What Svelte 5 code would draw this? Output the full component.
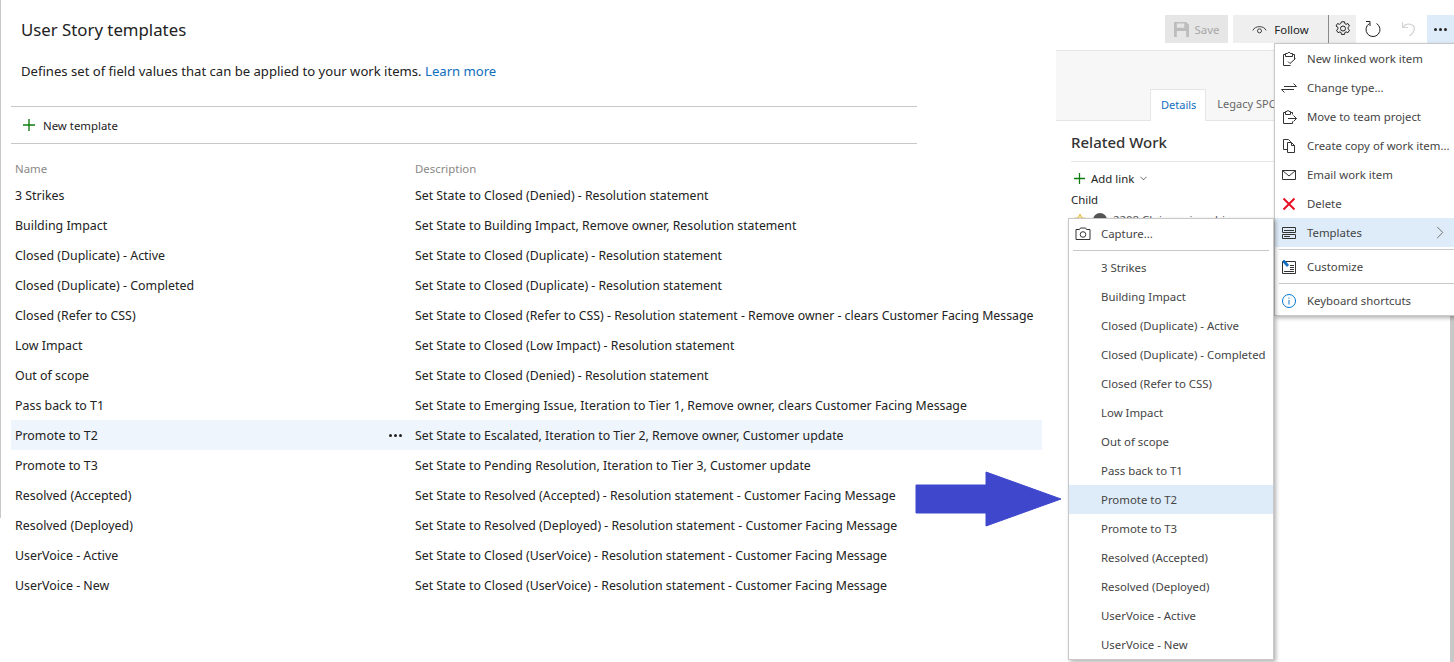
<script>
  const rows = [
    ['3 Strikes', 'Set State to Closed (Denied) - Resolution statement'],
    ['Building Impact', 'Set State to Building Impact, Remove owner, Resolution statement'],
    ['Closed (Duplicate) - Active', 'Set State to Closed (Duplicate) - Resolution statement'],
    ['Closed (Duplicate) - Completed', 'Set State to Closed (Duplicate) - Resolution statement'],
    ['Closed (Refer to CSS)', 'Set State to Closed (Refer to CSS) - Resolution statement - Remove owner - clears Customer Facing Message'],
    ['Low Impact', 'Set State to Closed (Low Impact) - Resolution statement'],
    ['Out of scope', 'Set State to Closed (Denied) - Resolution statement'],
    ['Pass back to T1', 'Set State to Emerging Issue, Iteration to Tier 1, Remove owner, clears Customer Facing Message'],
    ['Promote to T2', 'Set State to Escalated, Iteration to Tier 2, Remove owner, Customer update'],
    ['Promote to T3', 'Set State to Pending Resolution, Iteration to Tier 3, Customer update'],
    ['Resolved (Accepted)', 'Set State to Resolved (Accepted) - Resolution statement - Customer Facing Message'],
    ['Resolved (Deployed)', 'Set State to Resolved (Deployed) - Resolution statement - Customer Facing Message'],
    ['UserVoice - Active', 'Set State to Closed (UserVoice) - Resolution statement - Customer Facing Message'],
    ['UserVoice - New', 'Set State to Closed (UserVoice) - Resolution statement - Customer Facing Message']
  ]
</script>

<div class="page">
  <main class="main">
    <h1 class="title">User Story templates</h1>
    <p class="intro">Defines set of field values that can be applied to your work items. <span class="link">Learn more</span></p>

    <div class="cmdBar">
      <svg class="plus" viewBox="0 0 14 14"><path d="M7 0v14M0 7h14" /></svg>
      <span>New template</span>
    </div>

    <div class="listHead">
      <span class="headName">Name</span>
      <span>Description</span>
    </div>

    {#each rows as row}
      <div class="row" class:row--active={row[0] === 'Promote to T2'}>
        <span class="nameCol">{row[0]}</span>
        <span class="descCol">{row[1]}</span>
        {#if row[0] === 'Promote to T2'}
          <span class="rowDots"><i></i><i></i><i></i></span>
        {/if}
      </div>
    {/each}
  </main>

  <aside class="side">
    <div class="toolbar">
      <div class="btn btn--save">
        <svg viewBox="0 0 16 16" width="15" height="15"><path fill="#bdbdbd" fill-rule="evenodd" d="M0 0h13l3 3v13H0zM3 1.500V6h8V1.500zM3 9.500V16h10V9.500z" /></svg>
        <span>Save</span>
      </div>
      <div class="btn btn--follow">
        <svg viewBox="0 0 16 12" width="15" height="11" fill="none" stroke="#333"><path d="M.8 7c2.200-5.500 12.200-5.500 14.400 0" /><circle cx="8" cy="7.500" r="2.200" /></svg>
        <span>Follow</span>
      </div>
      <div class="btn btn--gear">
        <svg viewBox="0 0 16 16" width="16" height="16" fill="none" stroke="#222"><path d="M6.500.8h3l.4 1.900 1.200.6 1.800-.8 1.600 2.500-1.500 1.400v1.400l1.500 1.400-1.600 2.500-1.800-.8-1.200.6-.4 1.900h-3l-.4-1.900-1.200-.6-1.800.8-1.600-2.500 1.500-1.400V6.400L1 5 2.600 2.500l1.800.8 1.200-.6z" /><circle cx="8" cy="7.500" r="2.500" /></svg>
      </div>
      <div class="iconBtn">
        <svg viewBox="0 0 17 17" width="17" height="17" fill="none" stroke="#222"><path d="M11.500 2.500A7 7 0 1 1 4.500 2.500" /><path d="M1 .5h4v4.500" /></svg>
      </div>
      <div class="iconBtn">
        <svg viewBox="0 0 16 16" width="16" height="16" fill="none" stroke="#d4d4d4" stroke-width="1.200"><path d="M1.500 1v5.500H7M2 6C4 3 9 2 12 4.500c3 3 1 7-3.500 10.500" /></svg>
      </div>
      <div class="iconBtn iconBtn--on"><span class="rowDots"><i></i><i></i><i></i></span></div>
    </div>

    <div class="sideHead">
      <div class="tabs">
        <span class="tab tab--on">Details</span>
        <span class="tab">Legacy SPOC</span>
      </div>
    </div>

    <div class="sideBody">
      <h2 class="related">Related Work</h2>
      <div class="addLink">
        <svg class="plus plus--small" viewBox="0 0 14 14"><path d="M7 0v14M0 7h14" /></svg>
        <span>Add link</span>
        <svg viewBox="0 0 8 5" width="7" height="5" fill="none" stroke="#555"><path d="M.5.5 4 4 7.500.5" /></svg>
      </div>
      <div class="child">Child</div>
      <div class="childItem">
        <svg viewBox="0 0 14 14" width="14" height="14" fill="#fbeeb8" stroke="#e8b93a"><path d="M7 1l1.800 3.900 4.200.5-3.100 2.900.8 4.200L7 10.400 3.300 12.500l.8-4.200L1 5.400l4.200-.5z" /></svg>
        <span class="dot"></span>
        <span class="itemLink">2208 Cloig savings hi</span>
      </div>
    </div>
  </aside>

  <div class="menu menu--actions">
    <div class="mItem">
      <svg viewBox="0 0 16 16"><path d="M4.500 3.500h-2v11h7M11.500 3.500h2v5M4.500 5.500v-3h2C6.800 1 9.200 1 9.500 2.500h2v3zM7 10.500l2 2 5.500-5" /></svg>
      <span>New linked work item</span>
    </div>
    <div class="mItem">
      <svg viewBox="0 0 16 16"><path d="M3 6.500h12.500l-3-3M13 9.500H.5l3 3" /></svg>
      <span>Change type...</span>
    </div>
    <div class="mItem">
      <svg viewBox="0 0 16 16"><path d="M4.500 3.500h-2v11h9v-2M9.500 3.500h2v2M4.500 5.500v-3h1.500C6.300 1 7.700 1 8 2.500h1.500v3zM7 9.500h8.500M12.500 6.500l3 3-3 3" /></svg>
      <span>Move to team project</span>
    </div>
    <div class="mItem">
      <svg viewBox="0 0 16 16"><path d="M6.500 11.500h-4v-10h5l2 2v1M6.500 4.500h4l3 3v7h-7zM10.500 4.500v3h3" /></svg>
      <span>Create copy of work item...</span>
    </div>
    <div class="mItem">
      <svg viewBox="0 0 16 16"><path d="M1.500 3.500h13v9h-13zM1.500 3.500 8 9l6.500-5.500" /></svg>
      <span>Email work item</span>
    </div>
    <div class="mItem">
      <svg class="redX" viewBox="0 0 16 16"><path d="M2.500 2.500l11 11M13.500 2.500l-11 11" /></svg>
      <span>Delete</span>
    </div>
    <div class="mItem mItem--on">
      <svg viewBox="0 0 16 16"><path d="M1.500 2.500h13v5h-13zM1.500 9.500h13v4h-13zM3 5.500h10M3 11.500h6" /></svg>
      <span>Templates</span>
      <svg class="caret" viewBox="0 0 8 14"><path d="M1 1l6 6-6 6" /></svg>
    </div>
    <hr class="sep" />
    <div class="mItem">
      <svg viewBox="0 0 16 16"><path d="M1.500 2.500h13v12h-13zM9 6.500h4M9 8.500h4M9 10.500h4M3 12.500h10" /><path class="pen" d="M3 1l4.500 5-1.500 1.500L2 3z" /></svg>
      <span>Customize</span>
    </div>
    <hr class="sep" />
    <div class="mItem">
      <svg class="info" viewBox="0 0 16 16"><circle cx="8" cy="8" r="6.500" /><path d="M8 7v4.500M8 4.500v1.200" /></svg>
      <span>Keyboard shortcuts</span>
    </div>
  </div>

  <div class="menu menu--templates">
    <div class="mItem">
      <svg viewBox="0 0 16 16"><path d="M1 3.500h3.500L5.500 2h5l1 1.500H15v10H1z" /><circle cx="8" cy="8.500" r="2.800" /></svg>
      <span>Capture...</span>
    </div>
    <hr class="sep" />
    {#each rows as row}
      <div class="mItem" class:mItem--on={row[0] === 'Promote to T2'}>
        <span class="iconGap"></span>
        <span>{row[0]}</span>
      </div>
    {/each}
  </div>

  <svg class="arrow" viewBox="0 0 148 58" width="148" height="58"><path stroke-linejoin="round" d="M1 15h70V2l75 27-75 27V43H1z" /></svg>
</div>

<style>
  :global(body) {
    margin: 0;
    background: #fff;
  }

  .page {
    position: relative;
    width: 1454px;
    height: 662px;
    overflow: hidden;
    display: flex;
    font-family: 'Noto Sans', 'Open Sans', sans-serif;
    font-size: 11.4px;
    color: #333;
  }

  .main {
    width: 1056px;
    flex: none;
    box-sizing: border-box;
    padding: 0 14px 0 10px;
    height: 518px;
    border-left: 1px solid #c8c8c8;
  }

  .title {
    margin: 17px 0 0 10px;
    font-size: 16.8px;
    font-weight: 400;
    line-height: 26px;
    color: #222;
  }

  .intro {
    margin: 18px 0 0 10px;
    font-size: 13.1px;
    line-height: 20px;
    color: #222;
  }

  .link {
    color: #106ebe;
  }

  .cmdBar {
    margin-top: 25px;
    width: 894px;
    height: 36px;
    border-top: 1px solid #c8c8c8;
    border-bottom: 1px solid #c8c8c8;
    display: flex;
    align-items: center;
    gap: 8px;
    padding-left: 12px;
    color: #222;
  }

  .plus {
    width: 12px;
    height: 12px;
    fill: none;
    stroke: #107c10;
    stroke-width: 1.6;
  }

  .listHead {
    display: flex;
    height: 18px;
    margin: 16px 0 2px;
    line-height: 18px;
    color: #8a8886;
  }

  .headName {
    width: 400px;
    padding-left: 4px;
    flex: none;
  }

  .nameCol {
    width: 400px;
    padding-left: 4px;
    flex: none;
    font-size: 12.4px;
  }

  .descCol {
    font-size: 12.3px;
  }

  .row {
    position: relative;
    display: flex;
    height: 30px;
    line-height: 32px;
    white-space: nowrap;
    color: #222;
  }

  .row--active {
    background: #eff5fc;
  }

  .rowDots {
    display: flex;
    gap: 2px;
  }

  .rowDots i {
    width: 3px;
    height: 3px;
    border-radius: 50%;
    background: #222;
  }

  .row .rowDots {
    position: absolute;
    left: 378px;
    top: 14px;
  }

  .side {
    flex: 1;
    min-width: 0;
    border-right: 4px solid #c8c8c8;
    box-sizing: border-box;
  }

  .toolbar {
    height: 50px;
    box-sizing: border-box;
    padding-top: 15px;
    display: flex;
    align-items: flex-start;
    justify-content: flex-end;
    margin-right: -4px;
    background: #fff;
  }

  .btn {
    height: 28px;
    display: flex;
    align-items: center;
    background: #efefef;
    color: #222;
  }

  .btn--save {
    width: 63px;
    background: #e6e6e6;
    color: #a6a6a6;
    gap: 6px;
    justify-content: center;
    margin-right: 5px;
  }

  .btn--follow {
    width: 95px;
    gap: 7px;
    justify-content: center;
    border-right: 1px solid #8a8a8a;
  }

  .btn--gear {
    width: 27px;
    justify-content: center;
  }

  .iconBtn {
    width: 35px;
    height: 28px;
    display: flex;
    align-items: center;
    justify-content: center;
  }

  .iconBtn--on {
    width: 27px;
    margin-left: 1px;
    background: #deecf9;
  }

  .sideHead {
    height: 69px;
    background: #f7f7f7;
    border-top: 1px solid #e6e6e6;
    border-bottom: 1px solid #e6e6e6;
    display: flex;
    align-items: flex-end;
    padding-left: 94px;
  }

  .tabs {
    display: flex;
    margin-bottom: -1px;
  }

  .tab {
    height: 32px;
    line-height: 29px;
    padding: 0 11px;
    font-size: 11px;
    color: #666;
    box-sizing: border-box;
    white-space: nowrap;
  }

  .tab--on {
    background: #fff;
    color: #106ebe;
    border: 1px solid #e6e6e6;
    border-bottom: 0;
    padding: 0 9px 0 10px;
  }

  .sideBody {
    padding: 10px 0 0 15px;
  }

  .related {
    margin: 0;
    font-size: 15px;
    font-weight: 500;
    line-height: 22px;
    color: #333;
    padding-bottom: 8px;
    border-bottom: 1px solid #e6e6e6;
  }

  .addLink {
    display: flex;
    align-items: center;
    gap: 6px;
    margin-top: 7px;
    height: 18px;
    padding-left: 3px;
    color: #222;
  }

  .plus--small {
    width: 11px;
    height: 11px;
  }

  .child {
    margin-top: 4px;
    line-height: 18px;
    color: #222;
  }

  .childItem {
    display: flex;
    align-items: center;
    gap: 6px;
    margin-top: 3px;
    padding-left: 2px;
  }

  .dot {
    width: 14px;
    height: 14px;
    border-radius: 50%;
    background: #555;
  }

  .itemLink {
    color: #555;
    white-space: nowrap;
  }

  .menu {
    position: absolute;
    box-sizing: border-box;
    background: #fff;
    border: 1px solid #c8c8c8;
    box-shadow: 2px 2px 4px rgba(0, 0, 0, 0.3);
    color: #444;
  }

  .menu--actions {
    left: 1274px;
    top: 43px;
    width: 190px;
    height: 273px;
  }

  .menu--templates {
    left: 1068px;
    top: 218px;
    width: 206px;
    height: 442px;
  }

  .mItem {
    position: relative;
    height: 29px;
    display: flex;
    align-items: center;
    padding-left: 6px;
    gap: 10px;
    white-space: nowrap;
  }

  .mItem svg {
    width: 16px;
    height: 16px;
    flex: none;
    fill: none;
    stroke: #333;
  }

  .mItem .redX {
    stroke: #e81123;
    stroke-width: 2;
  }

  .mItem .info {
    stroke: #0078d4;
  }

  .mItem .pen {
    fill: #106ebe;
    stroke: #106ebe;
  }

  .mItem .caret {
    position: absolute;
    left: 161px;
    top: 8px;
    width: 8px;
    height: 13px;
    stroke: #666;
  }

  .mItem--on {
    background: #deecf9;
  }

  .iconGap {
    width: 16px;
    flex: none;
  }

  .sep {
    margin: 2px 4px;
    border: 0;
    border-top: 1px solid #c8c8c8;
  }

  .arrow {
    position: absolute;
    left: 915px;
    top: 470px;
  }

  .arrow path {
    fill: #3f48cc;
    stroke: #3f48cc;
  }
</style>
